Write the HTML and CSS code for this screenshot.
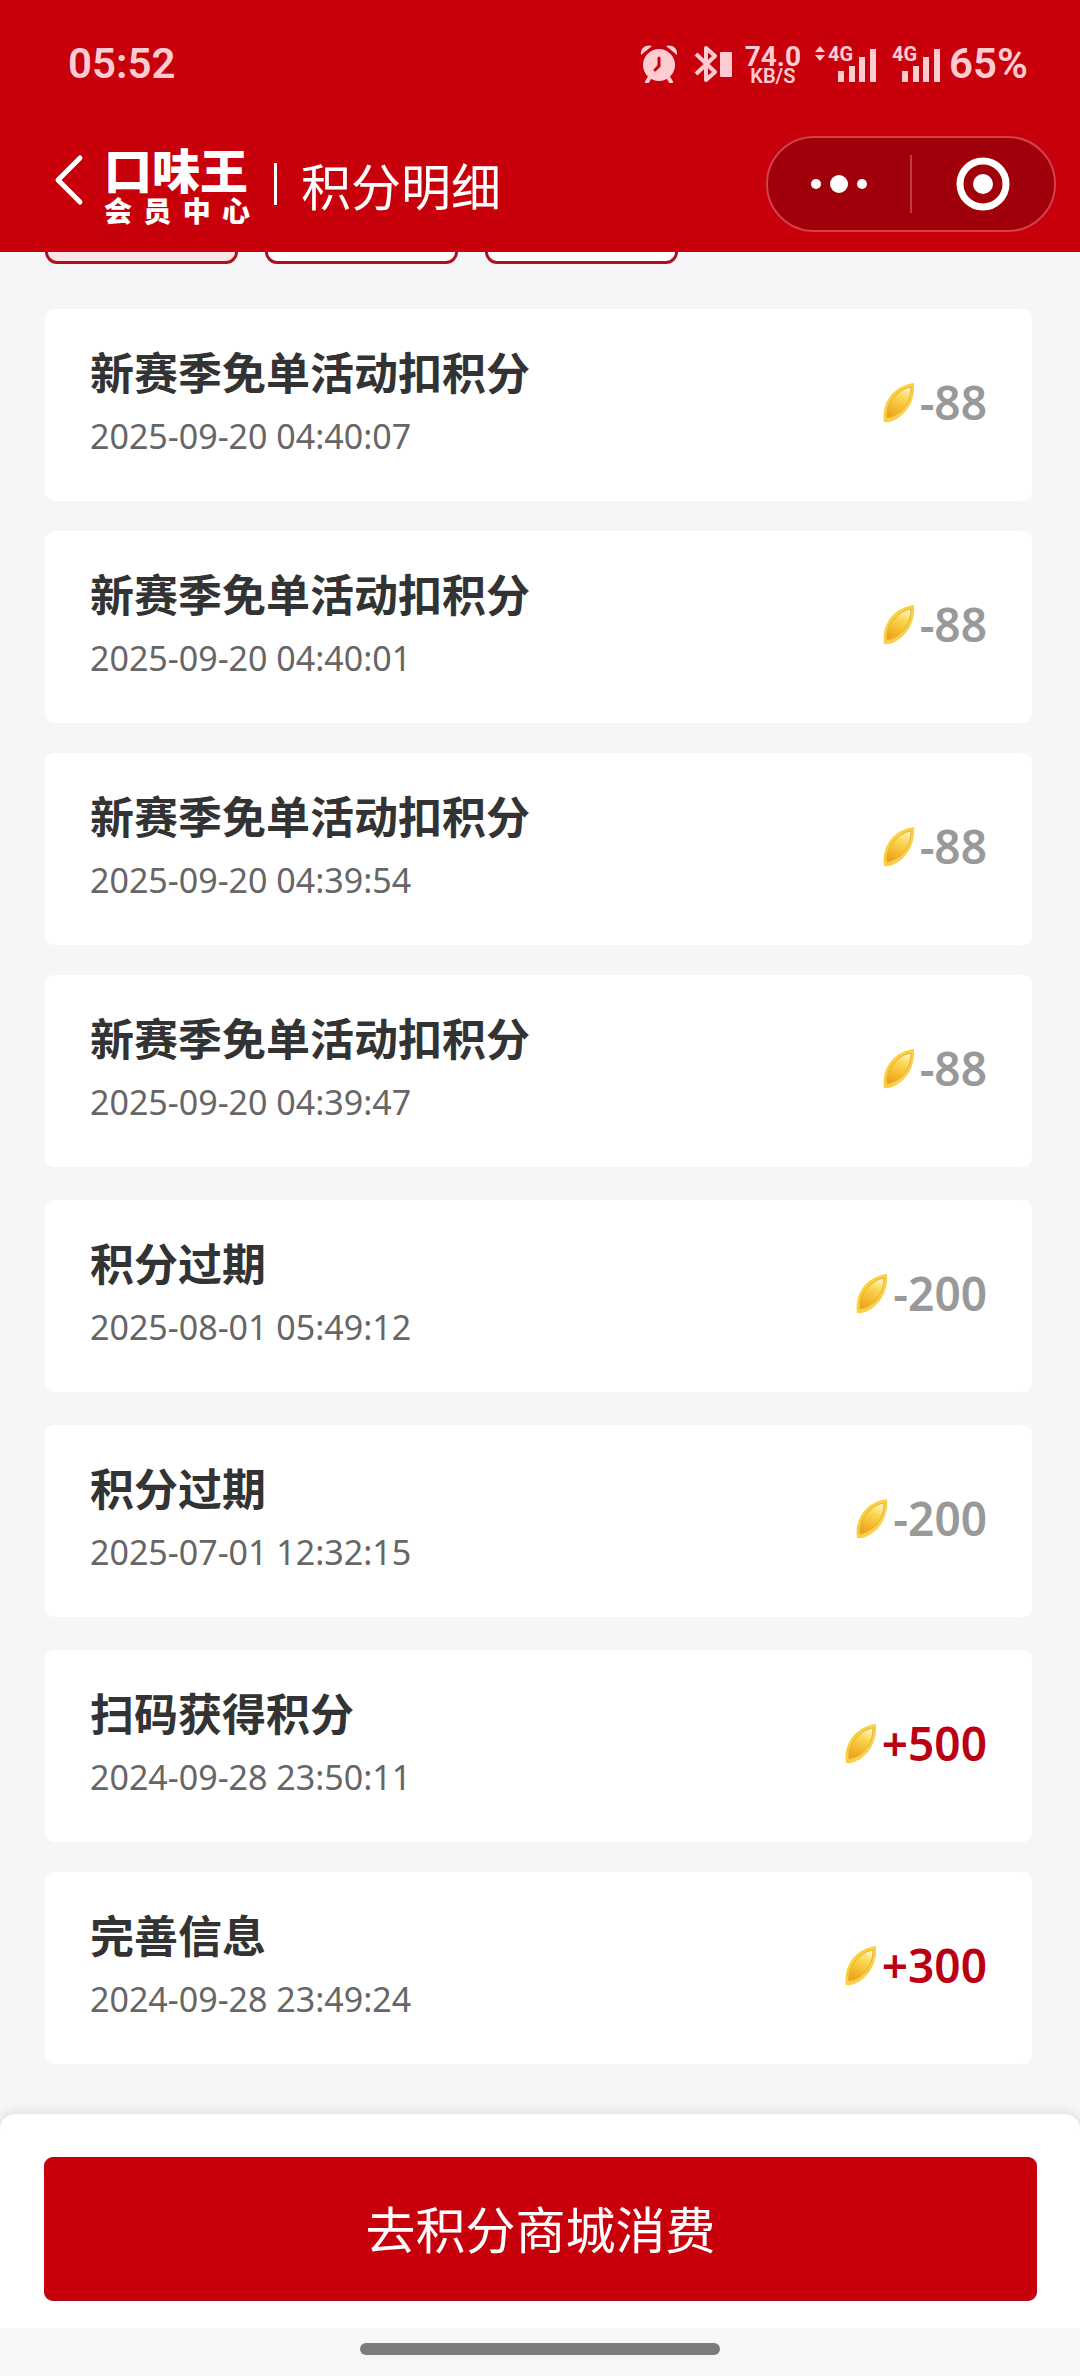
FILE: index.html
```html
<!DOCTYPE html>
<html lang="zh-CN">
<head>
<meta charset="utf-8">
<meta name="viewport" content="width=device-width, initial-scale=1">
<title>积分明细</title>
<link rel="stylesheet" href="styles.css">
</head>
<body>
<svg width="0" height="0" class="defs" aria-hidden="true">
  <defs>
    <linearGradient id="rim" x1="0" y1="0" x2="1" y2="1">
      <stop offset="0" stop-color="#fbd02f"/>
      <stop offset="1" stop-color="#f9cf5e"/>
    </linearGradient>
    <linearGradient id="core" x1="0.7" y1="0" x2="0.4" y2="1">
      <stop offset="0" stop-color="#fff3bd"/>
      <stop offset="0.35" stop-color="#fbd650"/>
      <stop offset="1" stop-color="#f0a21c"/>
    </linearGradient>
    <symbol id="seed" viewBox="0 0 34 42">
      <path d="M32 1C33 11 30 23 22 31C16 37 9 41 2 40C0 29 4 18 11 11C17 5 24 2 32 1Z" fill="url(#rim)"/>
      <path d="M29 5C29 14 26 22 20 28C15 33 10 35 5 36C4 28 7 20 13 14C18 9 23 6 29 5Z" fill="url(#core)" stroke="#e9b02c" stroke-width="1"/>
    </symbol>
  </defs>
</svg>
<div class="page">
  <header class="header">
    <div class="status">
      <time class="clock">05:52</time>
      <div class="status-items">
        <svg class="alarm" viewBox="0 0 38 38" width="38" height="38" aria-hidden="true">
          <circle cx="19" cy="20" r="16" fill="currentColor"/>
          <path d="M1 10C0 3 6 -1 12 1Z M37 10C38 3 32 -1 26 1Z" fill="currentColor"/>
          <path d="M10 32L7 37M28 32L31 37" stroke="currentColor" stroke-width="4" stroke-linecap="round"/>
          <path d="M19 13V21L15 25" fill="none" stroke="#c8000c" stroke-width="3" stroke-linecap="round"/>
        </svg>
        <svg class="bluetooth" viewBox="0 0 38 38" width="38" height="38" aria-hidden="true">
          <path d="M2 9L21 27L12 35V3L21 11L2 29" fill="none" stroke="currentColor" stroke-width="4" stroke-linejoin="round"/>
          <rect x="26" y="7" width="12" height="25" rx="1" fill="currentColor"/>
        </svg>
        <div class="speed"><span class="speed-value">74.0</span><span class="speed-unit">KB/S</span></div>
        <svg class="signal" viewBox="0 0 62 38" width="62" height="38" aria-hidden="true">
          <path d="M0 7L5 1L10 7Z M0 10H10L5 16Z" fill="currentColor"/>
          <text x="13" y="16" class="net">4G</text>
          <path d="M26 37V26M37 37V21M47 37V12M58 37V4" stroke="currentColor" stroke-width="6" stroke-linecap="butt"/>
        </svg>
        <svg class="signal" viewBox="0 0 50 38" width="50" height="38" aria-hidden="true">
          <text x="1" y="16" class="net">4G</text>
          <path d="M14 37V26M25 37V21M35 37V12M46 37V4" stroke="currentColor" stroke-width="6"/>
        </svg>
        <span class="battery">65%</span>
      </div>
    </div>
    <nav class="nav">
      <button class="back" type="button" aria-label="返回">
        <svg viewBox="0 0 30 52" width="30" height="52"><path d="M26 4L4 26L26 48" fill="none" stroke="#fff" stroke-width="5" stroke-linecap="round" stroke-linejoin="round"/></svg>
      </button>
      <div class="logo">
        <span class="logo-name">口味王</span>
        <span class="logo-sub"><span>会</span><span>员</span><span>中</span><span>心</span></span>
      </div>
      <h1 class="title">积分明细</h1>
      <div class="capsule">
        <button type="button" aria-label="更多">
          <svg viewBox="0 0 58 20" width="58" height="20"><g fill="#fff"><circle cx="6" cy="10" r="5"/><circle cx="29" cy="10" r="9"/><circle cx="52" cy="10" r="5"/></g></svg>
        </button>
        <button type="button" aria-label="关闭">
          <svg viewBox="0 0 54 54" width="54" height="54"><circle cx="27" cy="27" r="23" fill="none" stroke="#fff" stroke-width="7"/><circle cx="27" cy="27" r="10" fill="#fff"/></svg>
        </button>
      </div>
    </nav>
  </header>
  <main class="main">
    <div class="tabs">
      <button class="tab tab-active" type="button" aria-label="全部"></button>
      <button class="tab" type="button" aria-label="获取"></button>
      <button class="tab" type="button" aria-label="使用"></button>
    </div>
    <div class="months">
      <ul class="month">
        <li class="card"><div><h2 class="name">新赛季免单活动扣积分</h2><time class="date">2025-09-20 04:40:07</time></div><div class="amount"><svg class="seed"><use href="#seed"/></svg>-88</div></li>
        <li class="card"><div><h2 class="name">新赛季免单活动扣积分</h2><time class="date">2025-09-20 04:40:01</time></div><div class="amount"><svg class="seed"><use href="#seed"/></svg>-88</div></li>
        <li class="card"><div><h2 class="name">新赛季免单活动扣积分</h2><time class="date">2025-09-20 04:39:54</time></div><div class="amount"><svg class="seed"><use href="#seed"/></svg>-88</div></li>
        <li class="card"><div><h2 class="name">新赛季免单活动扣积分</h2><time class="date">2025-09-20 04:39:47</time></div><div class="amount"><svg class="seed"><use href="#seed"/></svg>-88</div></li>
      </ul>
      <ul class="month">
        <li class="card"><div><h2 class="name">积分过期</h2><time class="date">2025-08-01 05:49:12</time></div><div class="amount"><svg class="seed"><use href="#seed"/></svg>-200</div></li>
      </ul>
      <ul class="month">
        <li class="card"><div><h2 class="name">积分过期</h2><time class="date">2025-07-01 12:32:15</time></div><div class="amount"><svg class="seed"><use href="#seed"/></svg>-200</div></li>
      </ul>
      <ul class="month">
        <li class="card"><div><h2 class="name">扫码获得积分</h2><time class="date">2024-09-28 23:50:11</time></div><div class="amount amount-plus"><svg class="seed"><use href="#seed"/></svg>+500</div></li>
        <li class="card"><div><h2 class="name">完善信息</h2><time class="date">2024-09-28 23:49:24</time></div><div class="amount amount-plus"><svg class="seed"><use href="#seed"/></svg>+300</div></li>
      </ul>
    </div>
  </main>
  <footer class="footer">
    <div class="action"><button class="shop" type="button">去积分商城消费</button></div>
    <div class="home"><div class="home-bar"></div></div>
  </footer>
</div>
</body>
</html>
```
FILE: styles.css
```css
* { box-sizing: border-box; }
body {
  margin: 0;
  background: #f6f6f9;
  font-family: "Noto Sans CJK SC", sans-serif;
  color: #333;
}
button {
  margin: 0;
  padding: 0;
  border: 0;
  background: none;
  color: inherit;
  font: inherit;
}
svg { display: block; flex: none; }
.defs { position: absolute; }
.page { display: flex; flex-direction: column; min-height: 100vh; }

.header { position: sticky; top: 0; z-index: 1; background: #c8000c; color: #fff; }
.status {
  display: flex;
  align-items: center;
  justify-content: space-between;
  height: 128px;
  padding: 0 52px 0 68px;
  color: #ffccd2;
  font-family: Roboto, sans-serif;
  font-weight: 600;
}
.clock, .battery { font-size: 42px; line-height: 48px; }
.status-items { display: flex; align-items: center; }
.bluetooth { margin-left: 16px; }
.speed { display: flex; flex-direction: column; align-items: center; margin: 0 14px 0 13px; padding-top: 4px; }
.speed-value { font-size: 28px; line-height: 20px; font-weight: 700; }
.speed-unit { font-size: 20px; line-height: 18px; }
.signal { overflow: visible; }
.signal + .signal { margin: 0 8px 0 14px; }
.net { font: 700 20px Roboto, sans-serif; fill: currentColor; }

.nav { display: flex; align-items: center; padding: 8px 24px 20px 54px; }
.back { margin-right: 20px; padding-bottom: 8px; }
.logo { display: flex; flex-direction: column; gap: 4px; width: 146px; font-weight: 900; }
.logo-name { font-size: 48px; line-height: 48px; }
.logo-sub { display: flex; justify-content: space-between; font-size: 28px; line-height: 28px; }
.title {
  display: flex;
  align-items: center;
  gap: 24px;
  margin: 0 auto 0 24px;
  font-size: 50px;
  line-height: 60px;
  font-weight: 400;
}
.title::before { content: ""; width: 3px; height: 42px; background: #fff; }
.capsule {
  display: flex;
  align-items: center;
  width: 290px;
  height: 96px;
  border: 2px solid #d4404b;
  border-radius: 48px;
  background: #a0000a;
}
.capsule button { display: flex; flex: 1; align-items: center; justify-content: center; height: 58px; }
.capsule button + button { border-left: 2px solid #bd3d47; }

.main { flex: 1; padding: 0 48px 50px 45px; }
.tabs { display: flex; gap: 27px; margin-top: -60px; }
.tab { width: 193px; height: 72px; border: 3px solid #b00f1e; border-radius: 12px; background: #fff; }
.tab-active { background: #fbe5e7; }
.months { display: flex; flex-direction: column; gap: 33px; margin-top: 45px; }
.month { display: flex; flex-direction: column; gap: 30px; margin: 0; padding: 0; list-style: none; }
.card {
  display: flex;
  justify-content: space-between;
  height: 192px;
  padding: 32px 45px;
  border-radius: 9px;
  background: #fff;
}
.name { margin: 0; font-size: 44px; line-height: 60px; font-weight: 700; }
.date { display: block; margin-top: 10px; color: #666; font-family: "Noto Sans", sans-serif; font-size: 34px; line-height: 50px; }
.amount {
  display: flex;
  align-items: center;
  height: 122px;
  color: #999;
  font-family: "Noto Sans", sans-serif;
  font-size: 46px;
  font-weight: 600;
}
.amount-plus { color: #bb0013; }
.seed { width: 34px; height: 42px; margin: 2px 4px 0 0; }

.footer { position: sticky; bottom: 0; }
.action {
  padding: 43px 43px 27px 44px;
  border-radius: 15px 15px 0 0;
  background: #fff;
  box-shadow: 0 -3px 9px rgba(0, 0, 0, 0.09);
}
.shop {
  display: block;
  width: 100%;
  height: 144px;
  padding-bottom: 4px;
  border-block: 1px solid #a50c18;
  border-radius: 9px;
  background: #c8000c;
  color: #fff;
  font-size: 50px;
}
.home { display: flex; justify-content: center; padding: 15px 0 21px; background: #f7f7f7; }
.home-bar { width: 360px; height: 12px; border-radius: 6px; background: #7c7c7c; }
```
